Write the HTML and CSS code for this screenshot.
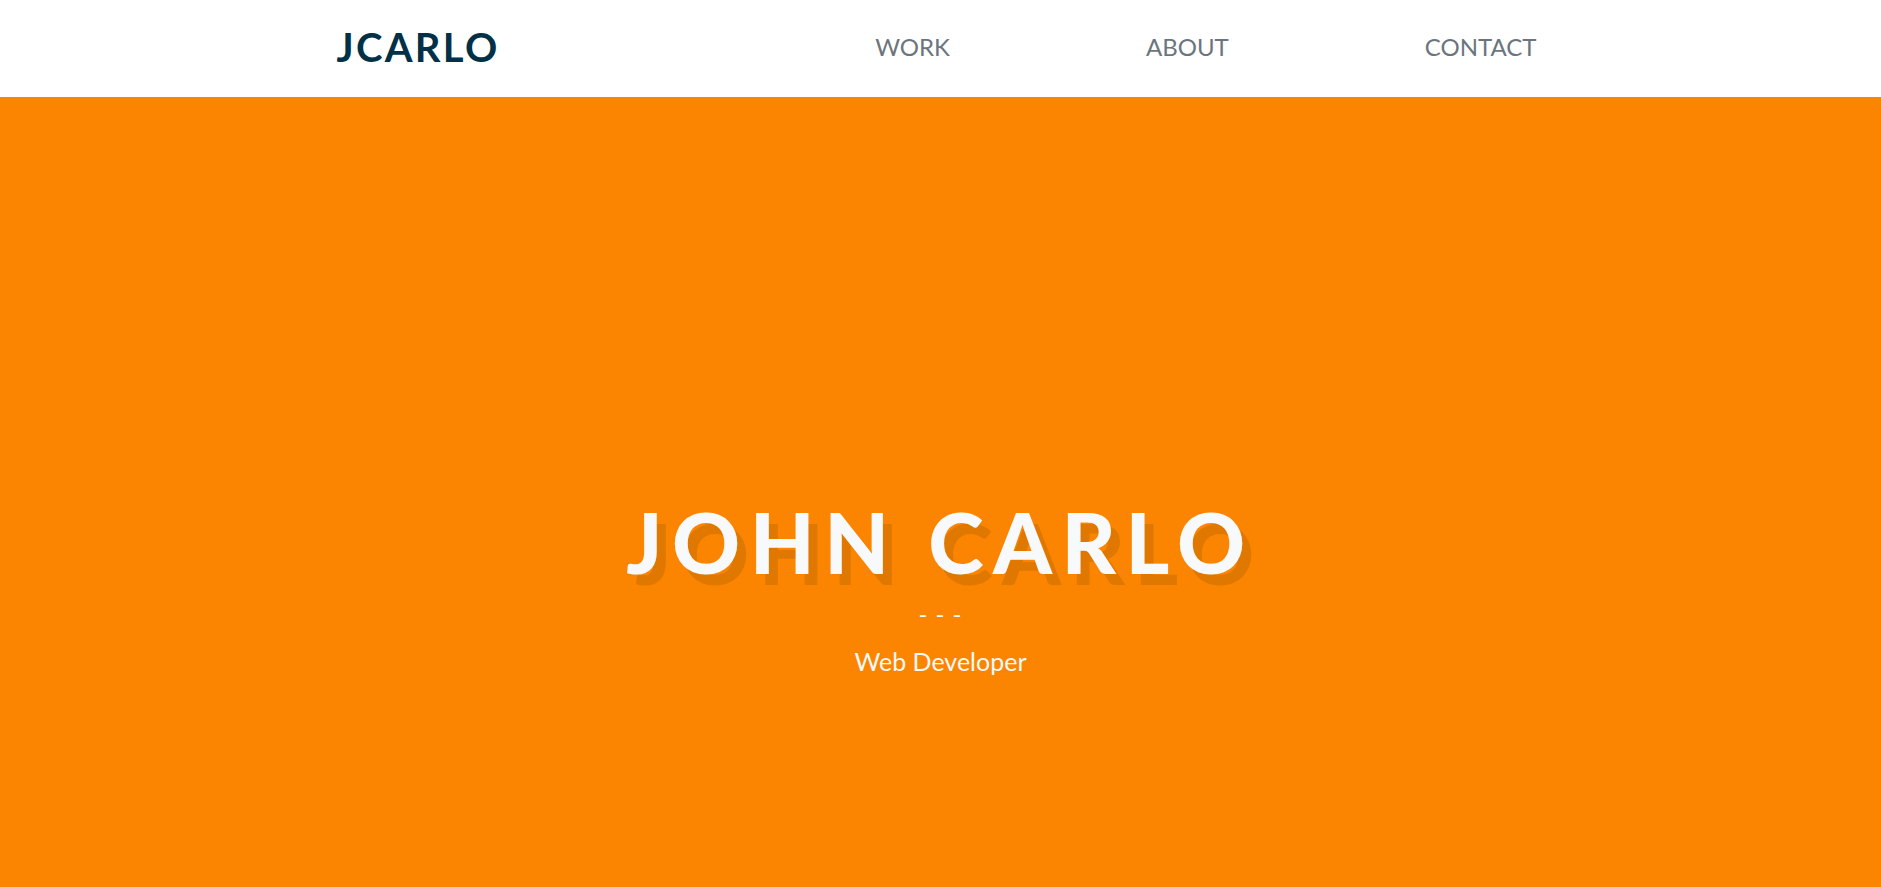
FILE: index.html
```html
<!DOCTYPE html>
<html lang="en">
<head>
<meta charset="utf-8">
<title>JCARLO</title>
<link rel="stylesheet" href="styles.css">
</head>
<body>
<header class="site-header">
  <div class="container header-inner">
    <a class="logo" href="#">JCARLO</a>
    <nav class="nav">
      <a class="nav-link" href="#">WORK</a>
      <a class="nav-link" href="#">ABOUT</a>
      <a class="nav-link" href="#">CONTACT</a>
    </nav>
  </div>
</header>
<section class="hero">
  <h1 class="hero-title">JOHN CARLO</h1>
  <div class="hero-divider">- - -</div>
  <p class="hero-subtitle">Web Developer</p>
</section>
</body>
</html>
```
FILE: styles.css
```css
* { box-sizing: border-box; }
html, body { margin: 0; padding: 0; }
body {
  font-family: Lato, "Open Sans", sans-serif;
  background: #fb8500;
  overflow: hidden;
}
.container {
  width: 1208px;
  margin: 0 auto;
}
.site-header {
  background: #ffffff;
  height: 97px;
}
.header-inner {
  height: 100%;
  display: flex;
  align-items: center;
  justify-content: space-between;
  padding-bottom: 3px;
}
.logo {
  color: #023047;
  font-weight: 700;
  font-size: 40px;
  letter-spacing: 2.3px;
  text-decoration: none;
  line-height: 1;
}
.nav {
  display: flex;
  gap: 196px;
  padding-right: 8px;
}
.nav-link {
  color: #6c757d;
  font-size: 24px;
  text-decoration: none;
  line-height: 1;
}
.hero {
  height: 790px;
  display: flex;
  flex-direction: column;
  align-items: center;
  padding-top: 403px;
  color: #f8f9fa;
}
.hero-title {
  margin: 0;
  font-size: 84px;
  font-weight: 900;
  line-height: 1;
  letter-spacing: 9.5px;
  text-shadow: 9px 11px 0 #e07800;
}
.hero-divider {
  margin-top: 18px;
  font-size: 24px;
  line-height: 1;
  letter-spacing: 1px;
}
.hero-subtitle {
  margin: 20px 0 0;
  font-size: 25px;
  line-height: 1.2;
}
```
